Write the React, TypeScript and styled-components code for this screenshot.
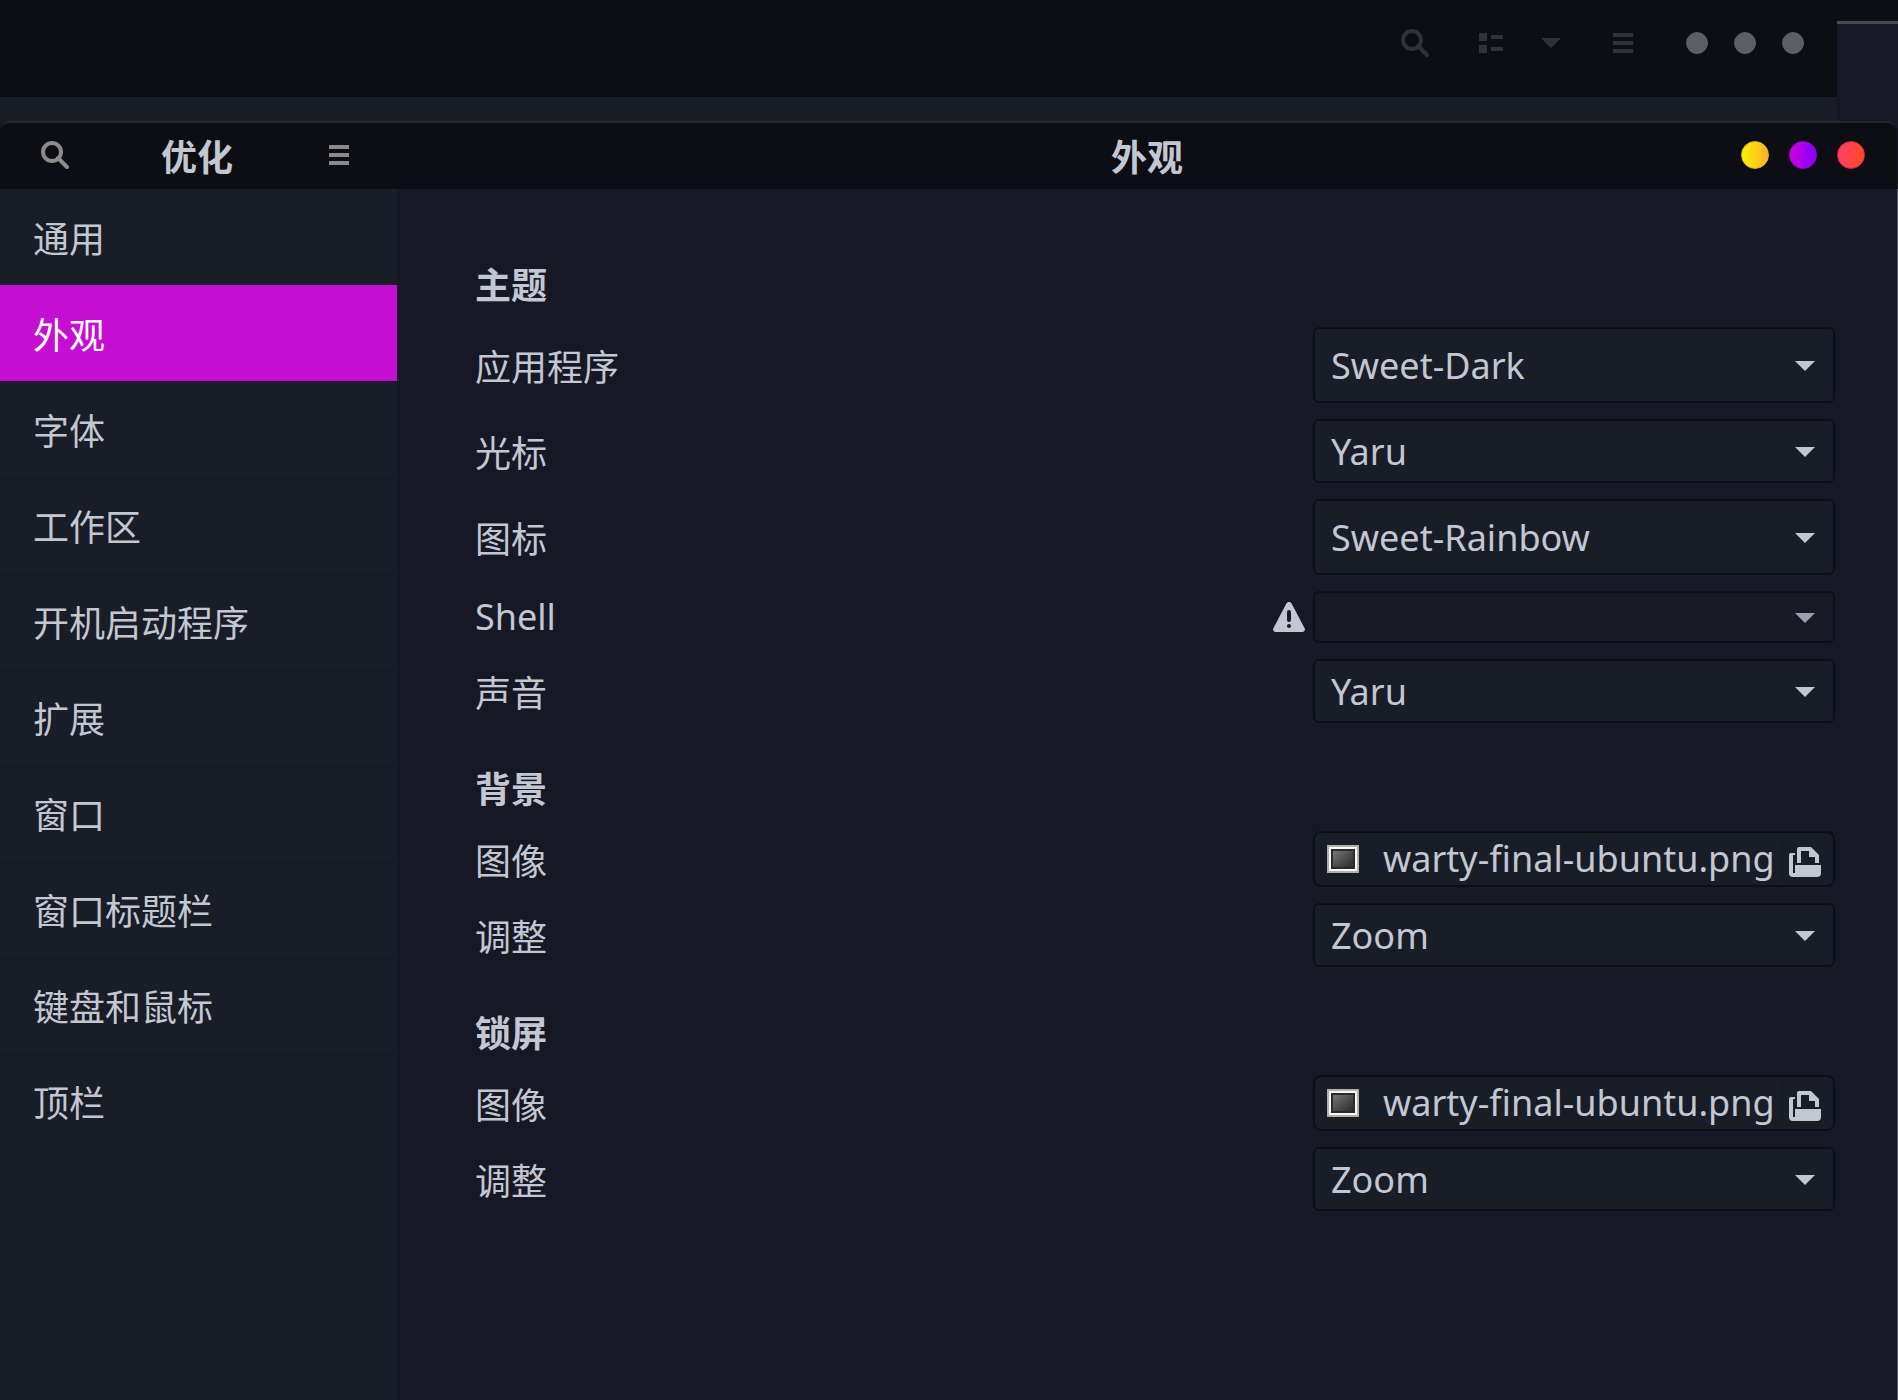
import React from "react";
import styled, { createGlobalStyle } from "styled-components";

const LATIN = `"Noto Sans", "Noto Sans CJK SC", sans-serif`;
const CJK = `"Noto Sans CJK SC", "Noto Sans", sans-serif`;

const color = {
  header: "#0c0e13",
  content: "#161925",
  panel: "#181d28",
  line: "#161a24",
  edge: "#0d0f17",
  text: "#c3c7d1",
  dim: "#9d9fac",
  accent: "#c50ed2",
};

const GlobalStyle = createGlobalStyle`
  * { box-sizing: border-box; }
  body { margin: 0; background: #181726; }
  button, select { font: inherit; color: inherit; }
`;

const Desktop = styled.div`
  display: flex;
  flex-direction: column;
  min-height: 100vh;
  font-family: ${CJK};
  font-size: 36px;
  line-height: 52px;
  color: ${color.text};
`;

const Backdrop = styled.div`
  display: flex;
  height: 121px;
`;

const BackWindow = styled.div`
  flex: 1;
  background: #191d28;
`;

const BackBar = styled.div`
  display: flex;
  align-items: center;
  justify-content: flex-end;
  height: 97px;
  padding: 0 33px 11px 0;
  background: ${color.header};
  color: #303237;
`;

const BackTools = styled.div`
  display: flex;
  align-items: center;
  margin-right: 13px;
`;

const DesktopEdge = styled.div`
  width: 61px;
  border-top: 21px solid ${color.header};
  background: linear-gradient(#4b4a52, #4b4a52) top / 100% 3px no-repeat, #181726;
`;

const IconButton = styled.button<{ $width?: number }>`
  display: flex;
  align-items: center;
  justify-content: center;
  width: ${(p) => p.$width ?? 56}px;
  height: 56px;
  padding: 0;
  border: 0;
  background: none;
`;

const Controls = styled.div<{ $gap: number }>`
  display: flex;
  align-items: center;
  justify-content: flex-end;
  gap: ${(p) => p.$gap}px;
`;

const Dot = styled.button<{ $size: number; $fill: string; $ring?: string }>`
  width: ${(p) => p.$size}px;
  height: ${(p) => p.$size}px;
  padding: 0;
  border: 1px solid ${(p) => p.$ring ?? "transparent"};
  border-radius: 50%;
  background: ${(p) => p.$fill};
  background-origin: border-box;
`;

const Window = styled.main`
  flex: 1;
  display: flex;
  flex-direction: column;
`;

const HeaderBar = styled.header`
  display: grid;
  grid-template-columns: 397px 1fr;
  height: 68px;
  margin-right: 1px;
  padding-bottom: 2px;
  border-top: 2px solid #24262b;
  border-radius: 10px 10px 0 0;
  background: ${color.header};
`;

const SideHeader = styled.div`
  display: flex;
  align-items: center;
  justify-content: space-between;
  padding: 0 30px 0 27px;
  color: #8b8b8b;
`;

const MainHeader = styled.div`
  display: grid;
  grid-template-columns: 1fr auto 1fr;
  align-items: center;
`;

const Title = styled.h1`
  grid-column: 2;
  margin: 0;
  font-size: 36px;
  font-weight: 700;
  color: ${color.text};
`;

const WindowControls = styled(Controls)`
  padding-right: 32px;
`;

const Body = styled.div`
  flex: 1;
  display: grid;
  grid-template-columns: 397px 1fr;
  border-right: 1px solid #5c606a;
`;

const Sidebar = styled.nav`
  background: ${color.panel};
`;

const NavLink = styled.a<{ $active?: boolean; $divided?: boolean }>`
  display: flex;
  align-items: center;
  height: 96px;
  padding: 0 33px;
  text-decoration: none;
  color: ${(p) => (p.$active ? "#ffffff" : color.text)};
  background: ${(p) => (p.$active ? color.accent : "transparent")};
  box-shadow: ${(p) => (p.$divided ? `inset 0 2px 0 ${color.line}` : "none")};
`;

const Content = styled.div`
  display: flex;
  flex-direction: column;
  gap: 38px;
  padding: 68px 62px 68px 78px;
  background: ${color.content};
`;

const Section = styled.section`
  display: flex;
  flex-direction: column;
  gap: 16px;
`;

const SectionTitle = styled.h2`
  margin: 0 0 2px;
  font-size: 36px;
  font-weight: 700;
`;

const Row = styled.div`
  display: flex;
  align-items: center;
  justify-content: space-between;
`;

const Label = styled.label<{ $latin?: boolean }>`
  font-family: ${(p) => (p.$latin ? LATIN : CJK)};
`;

const Field = styled.div`
  display: flex;
  align-items: center;
  gap: 8px;
`;

const Combo = styled.div<{ $height: number; $off?: boolean }>`
  display: grid;
  grid-template-rows: 100%;
  align-items: center;
  width: 522px;
  height: ${(p) => p.$height}px;
  color: ${(p) => (p.$off ? color.dim : color.text)};

  > select {
    grid-area: 1 / 1;
    width: 100%;
    height: 100%;
    padding: 2px 56px 0 16px;
    appearance: none;
    border: 2px solid ${color.edge};
    border-radius: 6px;
    background: ${(p) => (p.$off ? "#171a25" : color.panel)};
    font-family: ${LATIN};
    opacity: 1;
  }

  > svg {
    grid-area: 1 / 1;
    justify-self: end;
    margin: 2px 20px 0 0;
    pointer-events: none;
  }
`;

const FileButton = styled.button`
  display: flex;
  align-items: center;
  width: 522px;
  height: 56px;
  padding: 0 12px;
  border: 2px solid ${color.edge};
  border-radius: 8px;
  background: ${color.panel};
  font-family: ${LATIN};
  line-height: 52px;
  text-align: left;
`;

const FileName = styled.span`
  flex: 1;
  padding-left: 24px;
  white-space: nowrap;
`;

const FileOpen = styled.span`
  display: flex;
  align-items: center;
  height: 44px;
  padding: 6px 0 0 6px;
  border-left: 2px solid ${color.line};
`;

const SearchIcon = () => (
  <svg width="28" height="28" viewBox="0 0 28 28" fill="none" stroke="currentColor" strokeWidth="4" aria-hidden>
    <circle cx="11" cy="11" r="9" />
    <path d="M17 17l9 9" strokeLinecap="round" />
  </svg>
);

const MenuIcon = () => (
  <svg width="20" height="20" viewBox="0 0 20 20" fill="currentColor" aria-hidden>
    <path d="M0 0h20v4H0zM0 8h20v4H0zM0 16h20v4H0z" />
  </svg>
);

const ListIcon = () => (
  <svg width="24" height="20" viewBox="0 0 24 20" fill="currentColor" aria-hidden>
    <path d="M0 0h8v8H0zM0 12h8v8H0zM12 2h12v4H12zM12 14h12v4H12z" />
  </svg>
);

const Arrow = () => (
  <svg width="20" height="10" viewBox="0 0 20 10" fill="currentColor" aria-hidden>
    <path d="M0 0h20L10 10z" />
  </svg>
);

const WarningIcon = () => (
  <svg width="32" height="30" viewBox="0 0 32 30" aria-hidden>
    <path
      fill={color.text}
      d="M13.4 1.6C14.4-.4 17.6-.4 18.6 1.6L31.5 26c1 2 0 4-2.200 4H2.700C.5 30-.5 28 .5 26z"
    />
    <path stroke={color.content} strokeWidth="4" strokeLinecap="round" d="M16 10v8M16 24v0.1" />
  </svg>
);

const Thumbnail = () => (
  <svg width="32" height="28" viewBox="0 0 32 28" aria-hidden>
    <defs>
      <linearGradient id="thumb" x1="0" y1="0" x2="1" y2="1">
        <stop offset="0" stopColor="#777777" />
        <stop offset="1" stopColor="#2a2a2a" />
      </linearGradient>
    </defs>
    <path fill="#b0b0ac" d="M0 0h32v28H0z" />
    <path fill="#f8f8f8" d="M2 2h28v24H2z" />
    <path fill="#2b2b2b" d="M4 4h24v20H4z" />
    <path fill="url(#thumb)" d="M6 6h20v16H6z" />
  </svg>
);

const OpenIcon = () => (
  <svg width="32" height="30" viewBox="0 0 32 30" fill="currentColor" aria-hidden>
    <path d="M8 16V2q0-2 2-2h12l8 8v8h-4v-6h-6V4h-8v12z" />
    <path d="M6 6H2Q0 6 0 8v18q0 4 4 4h24q4 0 4-4v-8H6v8H4V8h2z" />
  </svg>
);

type ComboProps = { id: string; value: string; height: number; off?: boolean };

const ComboBox = ({ id, value, height, off }: ComboProps) => (
  <Combo $height={height} $off={off}>
    <select id={id} disabled={off} defaultValue={value}>
      <option value={value}>{value}</option>
    </select>
    <Arrow />
  </Combo>
);

const FileField = ({ id }: { id: string }) => (
  <FileButton id={id} type="button">
    <Thumbnail />
    <FileName>warty-final-ubuntu.png</FileName>
    <FileOpen>
      <OpenIcon />
    </FileOpen>
  </FileButton>
);

const pages = ["通用", "外观", "字体", "工作区", "开机启动程序", "扩展", "窗口", "窗口标题栏", "键盘和鼠标", "顶栏"];

const themes = [
  { id: "apps", label: "应用程序", value: "Sweet-Dark", height: 76 },
  { id: "cursor", label: "光标", value: "Yaru", height: 64 },
  { id: "icons", label: "图标", value: "Sweet-Rainbow", height: 76 },
  { id: "shell", label: "Shell", value: "", height: 52, off: true },
  { id: "sound", label: "声音", value: "Yaru", height: 64 },
];

const pictures = [
  { id: "background", title: "背景" },
  { id: "lock", title: "锁屏" },
];

export default function App() {
  return (
    <Desktop>
      <GlobalStyle />
      <Backdrop>
        <BackWindow>
          <BackBar>
            <BackTools>
              <IconButton $width={76} aria-label="搜索"><SearchIcon /></IconButton>
              <IconButton $width={76} aria-label="列表"><ListIcon /></IconButton>
              <IconButton $width={44} aria-label="视图选项"><Arrow /></IconButton>
              <IconButton $width={100} aria-label="菜单"><MenuIcon /></IconButton>
            </BackTools>
            <Controls $gap={26}>
              <Dot $size={22} $fill="#5d5e64" $ring="#5d5e64" aria-label="最小化" />
              <Dot $size={22} $fill="#5d5e64" $ring="#5d5e64" aria-label="最大化" />
              <Dot $size={22} $fill="#5d5e64" $ring="#5d5e64" aria-label="关闭" />
            </Controls>
          </BackBar>
        </BackWindow>
        <DesktopEdge />
      </Backdrop>
      <Window>
        <HeaderBar>
          <SideHeader>
            <IconButton aria-label="搜索"><SearchIcon /></IconButton>
            <Title>优化</Title>
            <IconButton aria-label="菜单"><MenuIcon /></IconButton>
          </SideHeader>
          <MainHeader>
            <Title as="h2">外观</Title>
            <WindowControls $gap={20}>
              <Dot $size={28} $fill="linear-gradient(90deg, #f9f500, #ffac2e)" $ring="#d9b51c" aria-label="最小化" />
              <Dot $size={28} $fill="linear-gradient(90deg, #d400d8, #7d00ff)" $ring="#a000d8" aria-label="最大化" />
              <Dot $size={28} $fill="linear-gradient(90deg, #ff3f6c, #ff4d1f)" $ring="#f01848" aria-label="关闭" />
            </WindowControls>
          </MainHeader>
        </HeaderBar>
        <Body>
          <Sidebar>
            {pages.map((page, i) => (
              <NavLink key={page} href="#" $active={page === "外观"} $divided={i > 2}>
                {page}
              </NavLink>
            ))}
          </Sidebar>
          <Content>
            <Section>
              <SectionTitle>主题</SectionTitle>
              {themes.map((t) => (
                <Row key={t.id}>
                  <Label htmlFor={t.id} $latin={t.off}>{t.label}</Label>
                  <Field>
                    {t.off && <WarningIcon />}
                    <ComboBox id={t.id} value={t.value} height={t.height} off={t.off} />
                  </Field>
                </Row>
              ))}
            </Section>
            {pictures.map((p) => (
              <Section key={p.id}>
                <SectionTitle>{p.title}</SectionTitle>
                <Row>
                  <Label htmlFor={`${p.id}-image`}>图像</Label>
                  <FileField id={`${p.id}-image`} />
                </Row>
                <Row>
                  <Label htmlFor={`${p.id}-adjust`}>调整</Label>
                  <ComboBox id={`${p.id}-adjust`} value="Zoom" height={64} />
                </Row>
              </Section>
            ))}
          </Content>
        </Body>
      </Window>
    </Desktop>
  );
}
